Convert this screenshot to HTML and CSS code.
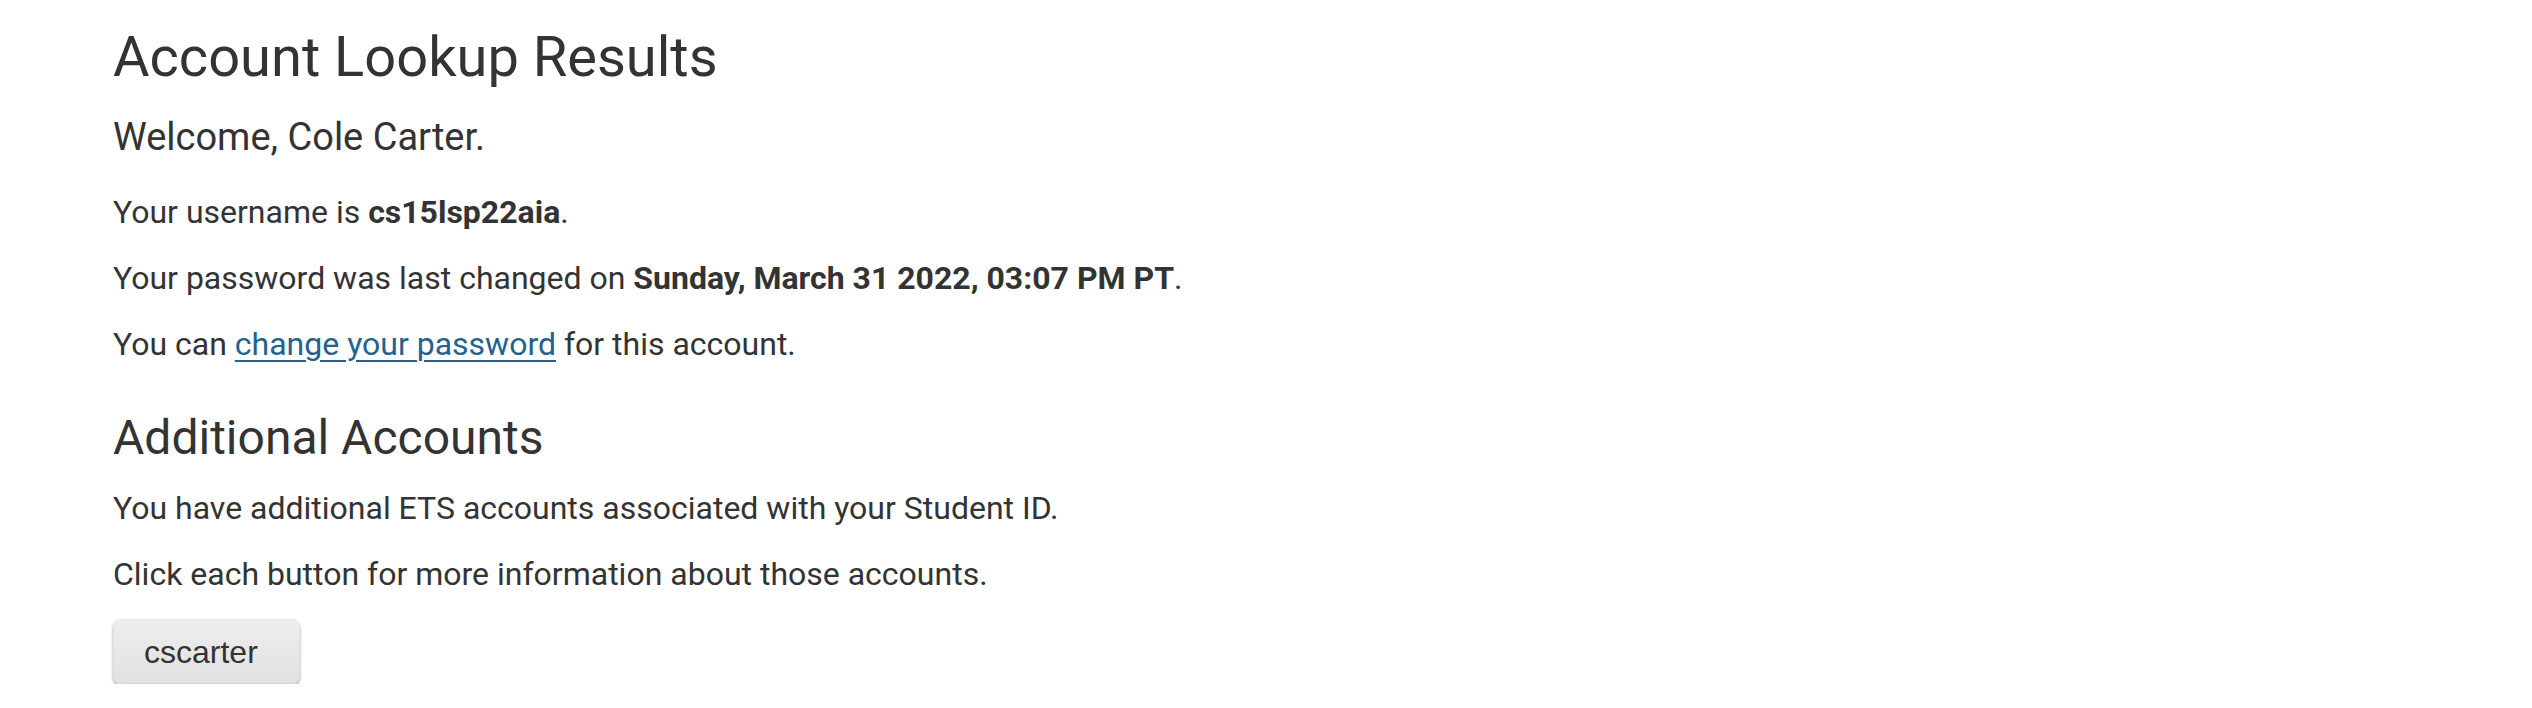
FILE: index.html
```html
<!DOCTYPE html>
<html lang="en">
<head>
<meta charset="utf-8">
<title>Account Lookup Results</title>
<link rel="stylesheet" href="styles.css">
</head>
<body>
<main class="container">
  <h1 class="title">Account Lookup Results</h1>
  <h2 class="welcome">Welcome, Cole Carter.</h2>
  <p class="first">Your username is <strong>cs15lsp22aia</strong>.</p>
  <p>Your password was last changed on <strong>Sunday, March 31 2022, 03:07 PM PT</strong>.</p>
  <p>You can <a href="#" class="link">change your password</a> for this account.</p>
  <h2 class="section">Additional Accounts</h2>
  <p>You have additional ETS accounts associated with your Student ID.</p>
  <p>Click each button for more information about those accounts.</p>
  <div class="buttons">
    <button class="account-btn" type="button">cscarter</button>
  </div>
</main>
</body>
</html>
```
FILE: styles.css
```css
html, body {
  margin: 0;
  padding: 0;
  background: #ffffff;
}

body {
  font-family: Roboto, "Helvetica Neue", Arial, sans-serif;
  color: #333333;
  font-size: 32px;
  line-height: 1.428571;
}

.container {
  padding: 0 0 0 113px;
  display: flow-root;
}

.title {
  font-size: 56px;
  line-height: 61.6px;
  font-weight: 400;
  margin: 27px 0 0;
}

.welcome {
  font-size: 38px;
  line-height: 41.8px;
  font-weight: 400;
  margin: 28px 0 0;
}

p {
  margin: 0 0 20px;
}

p.first {
  margin-top: 32px;
}

strong {
  font-weight: 700;
}

.link {
  color: #23628e;
  text-decoration: underline;
  text-decoration-thickness: 2px;
  text-underline-offset: 5px;
}

.section {
  font-size: 48px;
  line-height: 52.8px;
  font-weight: 400;
  margin: 44px 0 22px;
}

.buttons {
  padding-top: 1px;
}

.account-btn {
  font-family: "Liberation Sans", Arial, sans-serif;
  font-size: 32px;
  color: #333333;
  height: 65px;
  padding: 2px 42px 0 31px;
  border: 0;
  border-radius: 8px;
  background: linear-gradient(to bottom, #eeeeee 0%, #e1e1e1 100%);
  box-shadow: 0 2px 3px rgba(0, 0, 0, 0.35), inset 0 0 0 1px rgba(0, 0, 0, 0.04);
  cursor: pointer;
}
```
